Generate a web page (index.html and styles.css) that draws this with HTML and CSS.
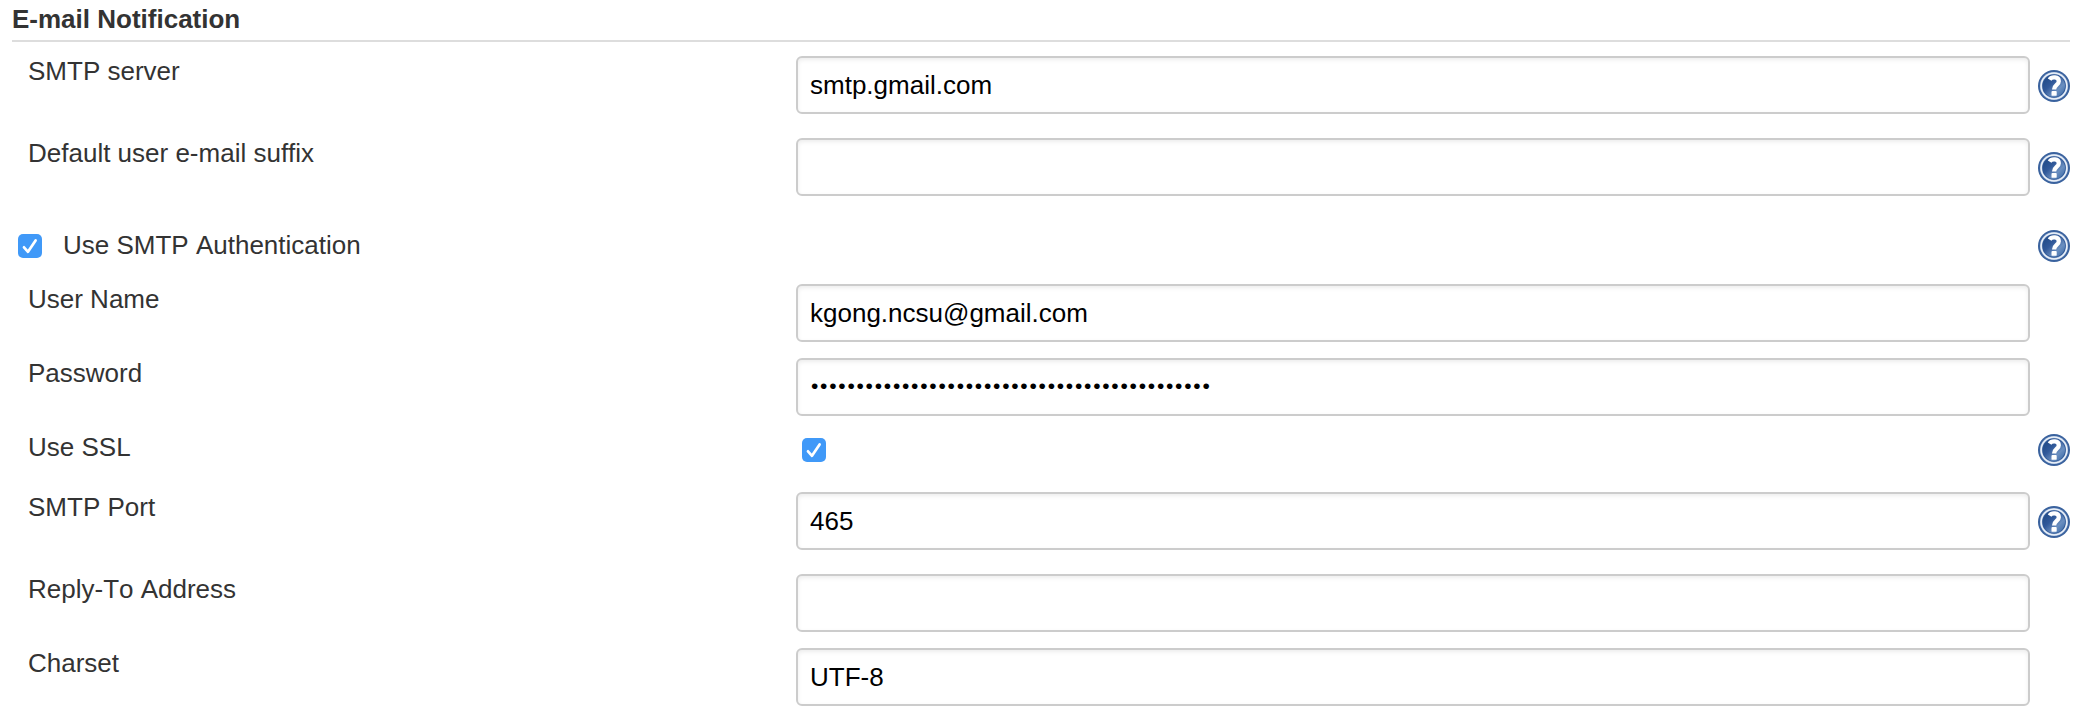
FILE: index.html
```html
<!DOCTYPE html>
<html lang="en">
<head>
<meta charset="utf-8">
<title>E-mail Notification</title>
<link rel="stylesheet" href="styles.css">
</head>
<body>
<svg class="defs" width="0" height="0" aria-hidden="true">
  <defs>
    <linearGradient id="disc" x1="0" y1="0" x2="1" y2="1">
      <stop offset="0.1" stop-color="#204a87"/>
      <stop offset="0.4" stop-color="#31599a"/>
      <stop offset="0.68" stop-color="#6b8fc0"/>
      <stop offset="1" stop-color="#3465a4"/>
    </linearGradient>
    <symbol id="help" viewBox="0 0 32 32">
      <circle cx="16" cy="16" r="16" fill="#3a629e"/>
      <circle cx="16" cy="16" r="14" fill="#a9bedd"/>
      <circle cx="16" cy="16" r="13.5" fill="#eef3f9"/>
      <circle cx="16" cy="16" r="12.2" fill="#a9bedd"/>
      <circle cx="16" cy="16" r="11.8" fill="#2c5594"/>
      <circle cx="16" cy="16" r="11" fill="url(#disc)"/>
      <path d="M11.6 9.6C13.6 6.4 20.8 6.6 20.8 11.2C20.8 15.2 16.1 14.8 16.1 19.6" fill="none" stroke="#fff" stroke-width="4.3"/>
      <rect x="13.5" y="21" width="5.2" height="4.8" rx="0.9" fill="#fff"/>
    </symbol>
  </defs>
</svg>
<form class="section">
  <h1 class="section-title">E-mail Notification</h1>
  <div class="row row-spaced">
    <label class="name" for="server">SMTP server</label>
    <input class="field" id="server" type="text" value="smtp.gmail.com">
    <svg class="help"><use href="#help"/></svg>
  </div>
  <div class="row row-spaced">
    <label class="name" for="suffix">Default user e-mail suffix</label>
    <input class="field" id="suffix" type="text">
    <svg class="help"><use href="#help"/></svg>
  </div>
  <div class="row-toggle">
    <svg class="check" viewBox="0 0 24 24"><rect width="24" height="24" rx="5"/><path d="M6 13.3L10 17.8L17.6 6.4"/></svg>
    <span class="toggle-name">Use SMTP Authentication</span>
    <svg class="help"><use href="#help"/></svg>
  </div>
  <div class="row">
    <label class="name" for="user">User Name</label>
    <input class="field" id="user" type="text" value="kgong.ncsu@gmail.com">
  </div>
  <div class="row">
    <label class="name" for="password">Password</label>
    <input class="field field-secret" id="password" type="password" value="00000000000000000000000000000000000000000000">
  </div>
  <div class="row row-check">
    <span class="name">Use SSL</span>
    <svg class="check" viewBox="0 0 24 24"><rect width="24" height="24" rx="5"/><path d="M6 13.3L10 17.8L17.6 6.4"/></svg>
    <svg class="help"><use href="#help"/></svg>
  </div>
  <div class="row row-spaced">
    <label class="name" for="port">SMTP Port</label>
    <input class="field" id="port" type="text" value="465">
    <svg class="help"><use href="#help"/></svg>
  </div>
  <div class="row">
    <label class="name" for="reply">Reply-To Address</label>
    <input class="field" id="reply" type="text">
  </div>
  <div class="row">
    <label class="name" for="charset">Charset</label>
    <input class="field" id="charset" type="text" value="UTF-8">
  </div>
</form>
</body>
</html>
```

FILE: styles.css
```css
* {
  box-sizing: border-box;
}

body {
  margin: 0;
  background: #fff;
  color: #333;
  font: 26px/30px "Liberation Sans", Helvetica, Arial, sans-serif;
  font-kerning: none;
}

.defs {
  display: block;
}

.section {
  padding: 0 22px 0 12px;
}

.section-title {
  height: 42px;
  margin: 0 0 14px;
  padding-top: 4px;
  border-bottom: 2px solid #ddd;
  font-size: 26px;
  line-height: 30px;
}

.row {
  display: grid;
  grid-template-columns: 784px 1234px 40px;
  align-items: center;
  height: 74px;
  padding-bottom: 16px;
}

.row-spaced {
  height: 82px;
  padding-bottom: 24px;
}

.name {
  align-self: start;
  padding-left: 16px;
}

.field {
  width: 100%;
  height: 58px;
  padding: 0 12px;
  border: 2px solid #ccc;
  border-radius: 6px;
  background: #fff;
  box-shadow: inset 0 2px 4px rgba(0, 0, 0, 0.075);
  color: #000;
  font: inherit;
  outline: none;
}

.field-secret {
  padding: 0 13px 2px;
  font-size: 21px;
  letter-spacing: 1.75px;
}

.help {
  display: block;
  width: 32px;
  height: 32px;
}

.row .help {
  margin-left: 8px;
}

.row-spaced .help {
  margin-top: 2px;
}

.check {
  display: block;
  width: 24px;
  height: 24px;
}

.check rect {
  fill: #4099f8;
}

.check path {
  fill: none;
  stroke: #fff;
  stroke-width: 2.7;
  stroke-linecap: round;
  stroke-linejoin: round;
}

.row-check {
  height: 60px;
  padding-bottom: 24px;
}

.row-check .check {
  margin-left: 6px;
}

.row-toggle {
  display: flex;
  align-items: center;
  height: 64px;
  padding: 0 0 12px 6px;
}

.toggle-name {
  flex: 1;
  padding: 0 0 2px 21px;
}
```
